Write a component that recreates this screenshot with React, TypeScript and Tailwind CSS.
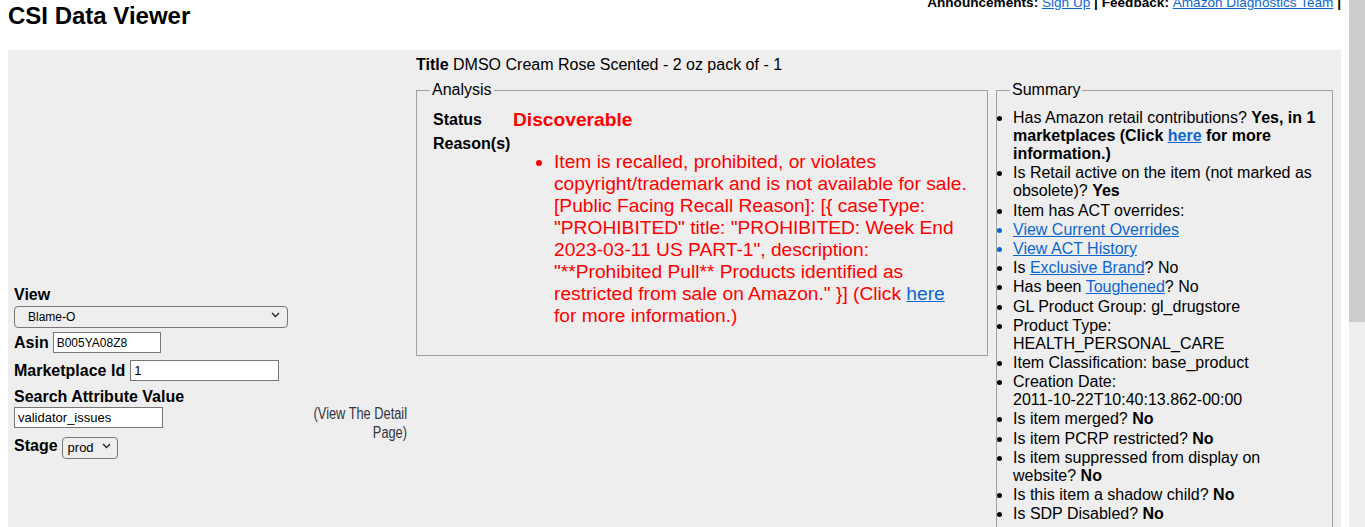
import React from "react";

const LINK = "text-[#0c66d0] underline";

function Chevron({ className = "" }: { className?: string }) {
  return (
    <svg className={className} width="9" height="6" viewBox="0 0 9 6" fill="none">
      <path d="M1 1l3.5 3.5L8 1" stroke="#222" strokeWidth="1.3" />
    </svg>
  );
}

export default function App() {
  const summary: React.ReactNode[] = [
    <>Has Amazon retail contributions? <b>Yes, in 1 marketplaces (Click <a className={LINK}>here</a> for more information.)</b></>,
    <>Is Retail active on the item (not marked as obsolete)? <b>Yes</b></>,
    <>Item has ACT overrides:</>,
  ];
  const rest: React.ReactNode[] = [
    <>Is <a className={LINK}>Exclusive Brand</a>? No</>,
    <>Has been <a className={LINK}>Toughened</a>? No</>,
    <>GL Product Group: gl_drugstore</>,
    <>Product Type: HEALTH_PERSONAL_CARE</>,
    <>Item Classification: base_product</>,
    <>Creation Date: <span className="whitespace-nowrap">2011-10-22T10:40:13.862-00:00</span></>,
    <>Is item merged? <b>No</b></>,
    <>Is item PCRP restricted? <b>No</b></>,
    <>Is item suppressed from display on website? <b>No</b></>,
    <>Is this item a shadow child? <b>No</b></>,
    <>Is SDP Disabled? <b>No</b></>,
  ];
  return (
    <div className="flex h-[527px] overflow-hidden bg-white text-black font-['Liberation_Sans',Arial,sans-serif]">
      <div className="min-w-0 flex-1 px-2">
        <header className="flex h-[50px] items-start justify-between">
          <h1 className="mt-[2px] text-[24px] font-bold leading-[28px]">CSI Data Viewer</h1>
          <div className="-mt-[5px] whitespace-nowrap text-[13.6px] font-bold leading-[16px]">
            Announcements: <a className={`${LINK} font-normal`}>Sign Up</a> | Feedback:{" "}
            <a className={`${LINK} font-normal`}>Amazon Diagnostics Team</a> |
          </div>
        </header>

        <div className="flex h-[700px] bg-[#eeeeee] pr-2">
          {/* left form column */}
          <div className="flex w-[408px] shrink-0 items-start pl-[6px] pr-[9px] pt-[236px]">
            <div className="w-[274px] shrink-0">
              <div className="text-[16px] font-bold leading-[18.4px]">View</div>
              <div className="relative h-[22px] w-[274px]">
                <select className="h-full w-full appearance-none rounded-[4px] border border-[#767676] bg-transparent pl-[13px] text-[12px] leading-[20px] text-black">
                  <option>Blame-O</option>
                </select>
                <Chevron className="pointer-events-none absolute right-[8px] top-[8px]" />
              </div>
              <div className="mt-[6px] flex items-center">
                <span className="text-[16px] font-bold leading-[18.4px]">Asin</span>
                <input
                  readOnly
                  value="B005YA08Z8"
                  className="ml-[4px] h-[21px] w-[108px] border border-[#767676] bg-white px-[3px] text-[12px] text-black"
                />
              </div>
              <div className="mt-[7px] flex items-center">
                <span className="whitespace-nowrap text-[16px] font-bold leading-[18.4px]">Marketplace Id</span>
                <input
                  readOnly
                  value="1"
                  className="ml-[5px] h-[21px] w-[149px] shrink-0 border border-[#767676] bg-white px-[3px] text-[13px] text-black"
                />
              </div>
              <div className="mt-[7px] text-[16px] font-bold leading-[18.4px]">Search Attribute Value</div>
              <input
                readOnly
                value="validator_issues"
                className="block h-[21px] w-[149px] border border-[#767676] bg-white px-[3px] text-[13px] text-black"
              />
              <div className="mt-[7px] flex items-center">
                <span className="text-[16px] font-bold leading-[18.4px]">Stage</span>
                <div className="relative ml-[4px] h-[22px] w-[56px]">
                  <select className="h-full w-full appearance-none rounded-[4px] border border-[#767676] bg-transparent pl-[5px] text-[13px] leading-[20px] text-black">
                    <option>prod</option>
                  </select>
                  <Chevron className="pointer-events-none absolute right-[7px] top-[8px]" />
                </div>
              </div>
            </div>
            <div className="flex min-w-0 flex-1 justify-end pt-[119.4px]">
              <div className="w-[126px] shrink-0 origin-top-right scale-x-[0.8] text-right text-[16px] leading-[18.3px] text-[#333340]">
                (View The Detail Page)
              </div>
            </div>
          </div>

          {/* middle column */}
          <div className="w-[572px] shrink-0 pt-[6px]">
            <div className="text-[16px] leading-[18.4px]">
              <b>Title</b> DMSO Cream Rose Scented - 2 oz pack of - 1
            </div>
            <fieldset className="mt-[7px] border border-[#a0a0a0] px-[13px] pb-[10px] pt-[9px]">
              <legend className="px-[2px] text-[16px] leading-[18.4px]">Analysis</legend>
              <div className="ml-[3px] grid grid-cols-[80px_1fr] gap-y-[4px]">
                <div className="self-center text-[16px] font-bold leading-[18.4px]">Status</div>
                <div className="text-[19.2px] font-bold leading-[22px] text-[#ff0000]">Discoverable</div>
                <div className="text-[16px] font-bold leading-[18.4px]">Reason(s)</div>
                <ul className="mb-[17px] mt-[16px] w-[455px] list-disc pl-[41px] text-[19.2px] leading-[22.1px] text-[#ff0000] marker:text-[#ff0000]">
                  <li>
                    Item is recalled, prohibited, or violates copyright/trademark and is not available for sale.
                    [Public Facing Recall Reason]: [{"{"} caseType: "PROHIBITED" title: "PROHIBITED: Week End
                    2023-03-11 US PART-1", description: "**Prohibited Pull** Products identified as restricted from
                    sale on Amazon." {"}"}] (Click <a className={LINK}>here</a> for more information.)
                  </li>
                </ul>
              </div>
            </fieldset>
          </div>

          <div className="w-[8px] shrink-0" />

          {/* right column */}
          <div className="w-[337px] shrink-0 pt-[31.4px]">
            <fieldset className="min-h-[520px] border border-[#a0a0a0] px-[13px] pb-[10px] pt-[9.5px]">
              <legend className="px-[2px] text-[16px] leading-[18.4px]">Summary</legend>
              <ul className="list-disc pl-[3px] text-[16px] leading-[18px]">
                {summary.map((c, i) => (
                  <li key={i} className="mb-[1.2px]">{c}</li>
                ))}
                <li className="mb-[1.2px] text-[#0c66d0]"><a className="underline">View Current Overrides</a></li>
                <li className="mb-[1.2px] text-[#0c66d0]"><a className="underline">View ACT History</a></li>
                {rest.map((c, i) => (
                  <li key={`r${i}`} className="mb-[1.2px]">{c}</li>
                ))}
              </ul>
            </fieldset>
          </div>
        </div>
      </div>

      {/* page scrollbar */}
      <div className="w-[16px] shrink-0 bg-[#efefef]">
        <div className="h-[322px] bg-[#cdcdcd]" />
      </div>
    </div>
  );
}
